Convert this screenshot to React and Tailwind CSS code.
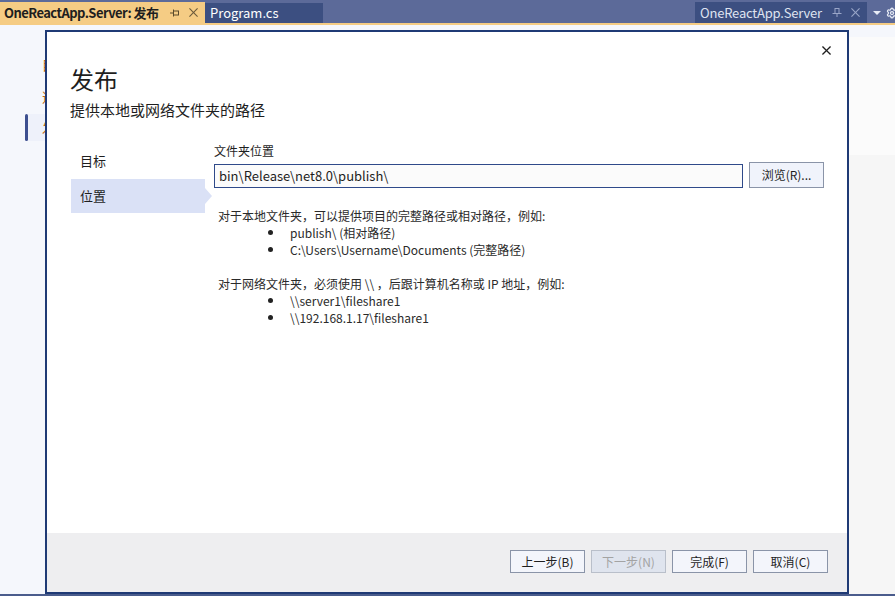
import React from 'react';
import { Settings } from 'lucide-react';

const font = "font-['Noto_Sans_CJK_SC','Noto_Sans',sans-serif]";

const PinH = ({ color }) => (
    <svg width="10" height="8" viewBox="0 0 10 8" fill="none" stroke={color} strokeWidth="1">
        <line x1="0" y1="4" x2="3" y2="4" />
        <line x1="3.5" y1="0.5" x2="3.5" y2="7.5" />
        <rect x="3.5" y="2" width="5" height="4" />
    </svg>
);

const PinV = ({ color }) => (
    <svg width="10" height="9" viewBox="0 0 10 9" fill="none" stroke={color} strokeWidth="1">
        <rect x="3" y="0.5" width="4" height="5" />
        <line x1="0.5" y1="5.5" x2="9.5" y2="5.5" />
        <line x1="5" y1="6" x2="5" y2="9" />
    </svg>
);

const XIcon = ({ color, size = 10, w = 1.2 }) => (
    <svg width={size} height={size} viewBox="0 0 10 10" stroke={color} strokeWidth={w}>
        <line x1="0.5" y1="0.5" x2="9.5" y2="9.5" />
        <line x1="9.5" y1="0.5" x2="0.5" y2="9.5" />
    </svg>
);

const FooterButton = ({ children, disabled }) => (
    <button
        className={`w-[75px] h-[23px] border text-[12px] flex items-center justify-center ${
            disabled
                ? 'bg-[#dfe4ee] border-[#b9bfca] text-[#a3a3a3]'
                : 'bg-[#f3f5fb] border-[#8a94a8] text-[#1e1e1e]'
        }`}
    >
        {children}
    </button>
);

const Bullet = ({ children }) => (
    <div className="flex items-center h-[17px] pl-[50px]">
        <span className="w-[5px] h-[5px] rounded-full bg-[#222] mr-[17px] shrink-0" />
        <span>{children}</span>
    </div>
);

export default function App() {
    return (
        <div className={`relative w-[895px] h-[596px] overflow-hidden bg-[#f5f7fc] flex flex-col ${font}`}>
            {/* tab strip */}
            <div className="h-[23px] bg-[#5c6a99] flex items-end shrink-0">
                <div className="h-[21px] w-[205px] shrink-0 bg-[#f5cc84] flex items-center pl-[4px] text-[13px] font-bold text-[#1e1e1e] whitespace-nowrap">
                    <span className="tracking-[-0.55px]">OneReactApp.Server: 发布</span>
                    <span className="ml-[12px]"><PinH color="#5a4a2a" /></span>
                    <span className="ml-[9px]"><XIcon color="#6b5a3a" size={9} /></span>
                </div>
                <div className="h-[20px] w-[118px] shrink-0 bg-[#3c4f81] flex items-center pl-[5px] text-[13px] text-white">
                    Program.cs
                </div>
                <div className="flex-1" />
                <div className="h-[21px] w-[172px] shrink-0 bg-[#3c4f81] flex items-center pl-[5px] text-[13px] text-[#dfe3f0] whitespace-nowrap">
                    <span className="tracking-[-0.2px]">OneReactApp.Server</span>
                    <span className="ml-[10px]"><PinV color="#9aa6c8" /></span>
                    <span className="ml-[9px]"><XIcon color="#9aa6c8" size={9} /></span>
                </div>
                <div className="h-[21px] w-[28px] shrink-0 overflow-hidden flex items-center pl-[6px] gap-[5px]">
                    <span className="shrink-0 w-0 h-0 border-l-[4px] border-r-[4px] border-t-[4px] border-l-transparent border-r-transparent border-t-[#e8ecf6]" />
                    <Settings size={12} color="#e8ecf6" strokeWidth={2.5} className="shrink-0" />
                </div>
            </div>
            <div className="h-[2px] bg-[#f5cc84] shrink-0" />

            {/* page behind dialog */}
            <div className="flex-1 flex">
                <div className="w-[45px] shrink-0 flex flex-col pt-[30px] text-[13px] text-[#c06a10]">
                    <div className="h-[32px] pl-[42px]">目</div>
                    <div className="h-[27px] pl-[42px]">选</div>
                    <div className="flex items-center h-[27px]">
                        <div className="ml-[25px] w-[3px] h-[27px] shrink-0 rounded-full bg-[#3d4f8f]" />
                        <div className="flex-1 h-[27px] bg-[#eef1fa] pl-[14px] flex items-center">发</div>
                    </div>
                </div>
                <div className="flex-1" />
                <div className="w-[47px] flex flex-col pt-[12px]">
                    <div className="h-[118px] bg-[#fbfbfb]" />
                    <div className="flex-1 bg-[#f6f6f6]" />
                </div>
            </div>
            <div className="h-[2px] bg-[#4a5c8c] shrink-0" />

            {/* dialog */}
            <div className="absolute left-[45px] top-[30px] w-[804px] h-[564px] border-2 border-[#1f3a75] bg-white flex flex-col text-[#1e1e1e]">
                <div className="flex-1 flex flex-col">
                    <div className="flex justify-end pt-[14px] pr-[16px]">
                        <XIcon color="#1e1e1e" size={9} w={1.4} />
                    </div>
                    <div className="pl-[23px] pt-[8px] text-[24px] leading-[32px]">发布</div>
                    <div className="pl-[23px] pt-[4px] text-[15px] leading-[22px] text-[#1e1e1e]">提供本地或网络文件夹的路径</div>
                    <div className="flex pt-[16px]">
                        <div className="w-[167px] pl-[24px] pt-[6px] text-[13px]">
                            <div className="h-[36px] pl-[9px] flex items-center">目标</div>
                            <div className="relative w-[134px] h-[34px] bg-[#dae1f6] pl-[9px] flex items-center">
                                位置
                                <span className="absolute right-[-7px] top-[9px] w-0 h-0 border-t-[8px] border-b-[8px] border-l-[7px] border-t-transparent border-b-transparent border-l-[#dae1f6]" />
                            </div>
                        </div>
                        <div className="flex-1 pr-[23px] pt-[6px]">
                            <div className="text-[12px] leading-[16px]">文件夹位置</div>
                            <div className="flex items-end gap-[6px] mt-[3px]">
                                <div className="flex-1 h-[24px] border border-[#2f4a8a] bg-[#fbfbfb] flex items-center pl-[4px] text-[13px]">
                                    bin\Release\net8.0\publish\
                                </div>
                                <button className="w-[75px] h-[26px] border border-[#8a94a8] bg-[#f0f3fb] text-[12px] flex items-center justify-center">
                                    浏览(R)...
                                </button>
                            </div>
                            <div className="pl-[4px] pt-[19px] text-[12px] leading-[17px] text-[#2a2a2a]">
                                <div>对于本地文件夹，可以提供项目的完整路径或相对路径，例如:</div>
                                <Bullet>publish\ (相对路径)</Bullet>
                                <Bullet>C:\Users\Username\Documents (完整路径)</Bullet>
                                <div className="h-[17px]" />
                                <div>对于网络文件夹，必须使用 \\ ，后跟计算机名称或 IP 地址，例如:</div>
                                <Bullet>\\server1\fileshare1</Bullet>
                                <Bullet>\\192.168.1.17\fileshare1</Bullet>
                            </div>
                        </div>
                    </div>
                </div>
                <div className="h-[59px] bg-[#eeeef0] flex items-start justify-end gap-[6px] pt-[17px] pr-[19px]">
                    <FooterButton>上一步(B)</FooterButton>
                    <FooterButton disabled>下一步(N)</FooterButton>
                    <FooterButton>完成(F)</FooterButton>
                    <FooterButton>取消(C)</FooterButton>
                </div>
            </div>
        </div>
    );
}
